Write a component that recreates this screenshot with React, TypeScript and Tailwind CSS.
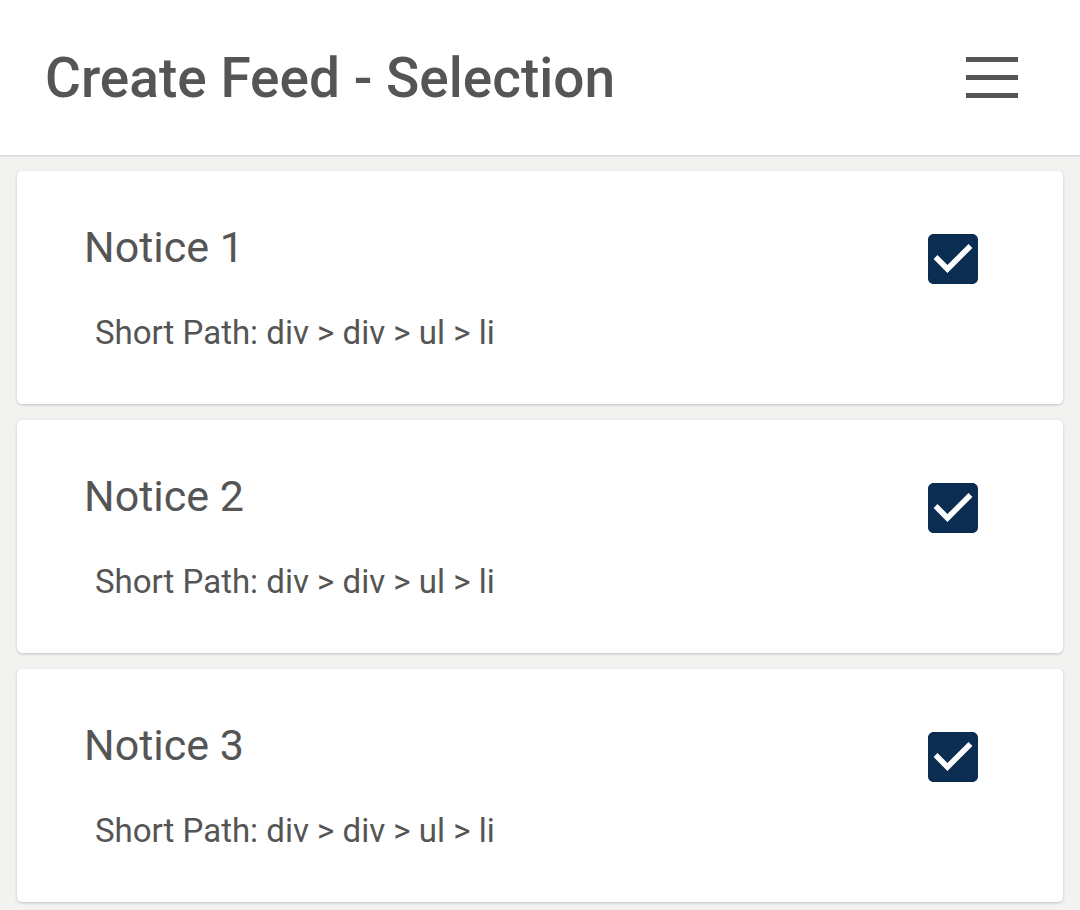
const notices = ["Notice 1", "Notice 2", "Notice 3"];

function CheckBox() {
  return (
    <svg viewBox="3 3 18 18" className="h-[50px] w-[50px]">
      <path
        fill="#0b2d52"
        d="M19 3H5c-1.11 0-2 .9-2 2v14c0 1.1.89 2 2 2h14c1.11 0 2-.9 2-2V5c0-1.1-.89-2-2-2zm-9 14l-5-5 1.41-1.41L10 14.17l7.59-7.59L19 8l-9 9z"
      />
    </svg>
  );
}

function NoticeCard({ title }: { title: string }) {
  return (
    <div className="flex h-[233px] items-start justify-between rounded-[5px] bg-white pl-[67px] pr-[85px] pt-[50px] shadow-[0_1px_3px_rgba(0,0,0,0.2)]">
      <div className="flex flex-col">
        <h2 className="text-[43px] leading-[52px] text-[#555]">{title}</h2>
        <p className="mt-[40px] pl-[11px] text-[33px] leading-[40px] text-[#555]">
          Short Path: div &gt; div &gt; ul &gt; li
        </p>
      </div>
      <div className="mt-[13px]">
        <CheckBox />
      </div>
    </div>
  );
}

export default function App() {
  return (
    <div className="min-h-[910px] bg-[#f2f2f1] font-['Roboto',sans-serif]">
      <header className="flex h-[155px] items-center justify-between bg-white pl-[45px] pr-[62px] shadow-[0_1px_2px_rgba(0,0,0,0.15)]">
        <h1 className="text-[55px] font-medium leading-[64px] text-[#555]">Create Feed - Selection</h1>
        <div className="flex flex-col gap-[13px]">
          <span className="h-[5px] w-[52px] bg-[#555]" />
          <span className="h-[5px] w-[52px] bg-[#555]" />
          <span className="h-[5px] w-[52px] bg-[#555]" />
        </div>
      </header>
      <main className="flex flex-col gap-[16px] px-[17px] pt-[16px]">
        {notices.map((n) => (
          <NoticeCard key={n} title={n} />
        ))}
      </main>
    </div>
  );
}
